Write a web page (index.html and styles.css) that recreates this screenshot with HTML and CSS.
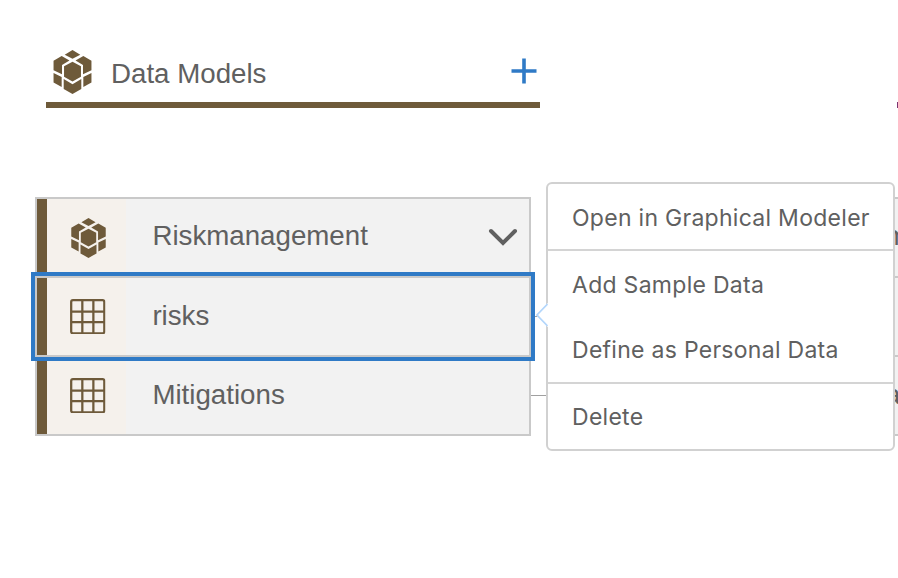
FILE: index.html
```html
<!DOCTYPE html>
<html lang="en">
<head>
<meta charset="utf-8">
<title>Data Models</title>
<link rel="stylesheet" href="styles.css">
</head>
<body>
<svg class="defs" aria-hidden="true">
  <symbol id="cube" viewBox="0 0 112 130">
    <path d="M56 0 79 14 56 26 33 14ZM24 18 47 31 25 44V72L0 60V32ZM88 18 112 32V60L87 72V44L65 31ZM56 35 81 48V79L56 93 31 79V48ZM0 68 24 80V109L0 96ZM112 68V96L88 109V80ZM30 86 56 101 82 86V115L56 130 30 115Z"/>
  </symbol>
  <symbol id="table" viewBox="0 0 36 36">
    <path d="M3 1.2h30q1.8 0 1.8 1.8v30q0 1.8-1.8 1.8H3q-1.8 0-1.8-1.8V3q0-1.8 1.8-1.8ZM12.5 1v34M23.7 1v34M1 12.7h34M1 23.5h34"/>
  </symbol>
</svg>
<main class="board">
  <section class="column">
    <header class="heading">
      <svg class="heading-icon"><use href="#cube"/></svg>
      <h1>Data Models</h1>
      <svg class="plus" viewBox="0 0 26 26"><path d="M13 .5v25M.5 13h25"/></svg>
    </header>
    <div class="list">
      <div class="row first">
        <span class="tile"><svg class="cube"><use href="#cube"/></svg></span>
        <span class="label">Riskmanagement</span>
        <svg class="chevron" viewBox="0 0 30 18"><path d="M3 3 15 15 27 3"/></svg>
      </div>
      <div class="row middle selected">
        <span class="tile"><svg class="table"><use href="#table"/></svg></span>
        <span class="label">risks</span>
      </div>
      <div class="row">
        <span class="tile"><svg class="table"><use href="#table"/></svg></span>
        <span class="label">Mitigations</span>
      </div>
    </div>
  </section>
  <div class="connectors"><i></i><i></i></div>
  <section class="column services">
    <header class="heading"></header>
    <div class="list">
      <div class="row first"><span class="label">m</span></div>
      <div class="row middle"></div>
      <div class="row"><span class="label">a</span></div>
    </div>
  </section>
</main>
<nav class="menu">
  <svg class="pointer" viewBox="0 0 12 24"><path class="fill" d="M12 1 1 12 12 23Z"/><path d="M11.5 1 1 12 11.5 23"/></svg>
  <div class="group"><a>Open in Graphical Modeler</a></div>
  <div class="group pair"><a>Add Sample Data</a><a>Define as Personal Data</a></div>
  <div class="group"><a>Delete</a></div>
</nav>
</body>
</html>
```
FILE: styles.css
```css
* { box-sizing: border-box; }
body {
  margin: 0;
  height: 578px;
  overflow: hidden;
  position: relative;
  background: #fff;
  color: #606060;
  font-family: "Liberation Sans", Arial, sans-serif;
}
.defs { position: absolute; width: 0; height: 0; }
.board { display: flex; height: 578px; overflow: hidden; }
.column { flex: none; width: 496px; margin-left: 35px; }
.heading {
  display: flex;
  align-items: center;
  height: 70px;
  margin: 38px 0 0 11px;
  width: 494px;
  padding: 0 3.5px 0 7px;
  border-bottom: 6px solid #6e5a3a;
}
.heading-icon { width: 39px; height: 44px; margin-top: 3px; fill: #6e5a3a; }
h1 { margin: 7px auto 0 19px; font-size: 27.7px; font-weight: 400; line-height: 32px; }
.plus { width: 26px; height: 26px; margin-top: 2px; fill: none; stroke: #2f7ac6; stroke-width: 3.6; }
.list {
  width: 496px;
  height: 239px;
  margin-top: 89px;
  border: 2px solid #c9c9c9;
  background: #f2f2f2;
  display: grid;
  grid-template-rows: 77px 81px 77px;
}
.row { display: flex; align-items: center; }
.row::before { content: ""; width: 10px; height: 100%; background: #6e5a3a; }
.tile {
  width: 79px;
  height: 100%;
  display: flex;
  align-items: center;
  padding-left: 22px;
  background: #f5f1ec;
}
.cube { width: 39px; height: 40px; fill: #6e5a3a; }
.table { width: 35.5px; height: 35.5px; margin-left: 1px; fill: none; stroke: #6e5a3a; stroke-width: 2.3; }
.label { margin: -2px 0 0 26.4px; font-size: 27.7px; line-height: 32px; }
.first .label { margin-top: -4px; }
.chevron { width: 30px; height: 18px; margin: -2px 11px 0 auto; fill: none; stroke: #606060; stroke-width: 4; stroke-linecap: round; }
.middle {
  margin: 0 -2px;
  border: 2px solid #c9c9c9;
}
.selected {
  position: relative;
  z-index: 1;
  outline: 4px solid #2f7ac6;
}
.connectors {
  flex: none;
  width: 269px;
  padding-top: 316px;
  display: flex;
  flex-direction: column;
  gap: 78px;
}
.connectors i { height: 1px; background: #a0a0a0; }
.services { margin-left: 0; }
.services .heading { margin-left: 97px; border-color: #7d336f; }
.services .label { margin-left: 73px; }
.menu {
  position: absolute;
  z-index: 2;
  left: 546px;
  top: 182px;
  width: 349px;
  height: 269px;
  border: 2px solid #d1d1d1;
  border-radius: 6px;
  background: #fff;
  font: 23px/32px Inter, sans-serif;
}
.group { display: grid; align-items: center; height: 65px; padding: 2px 24px 0; letter-spacing: .28px; }
.group a { white-space: nowrap; }
.group + .group { border-top: 2px solid #d4d4d4; height: 67px; padding-top: 0; }
.group.pair { height: 133px; padding-top: 2px; }
.pointer { position: absolute; left: -12px; top: 119px; width: 12px; height: 24px; fill: none; stroke: #b3d6fb; stroke-width: 1.7; }
.pointer .fill { fill: #fff; stroke: #fff; }
```
